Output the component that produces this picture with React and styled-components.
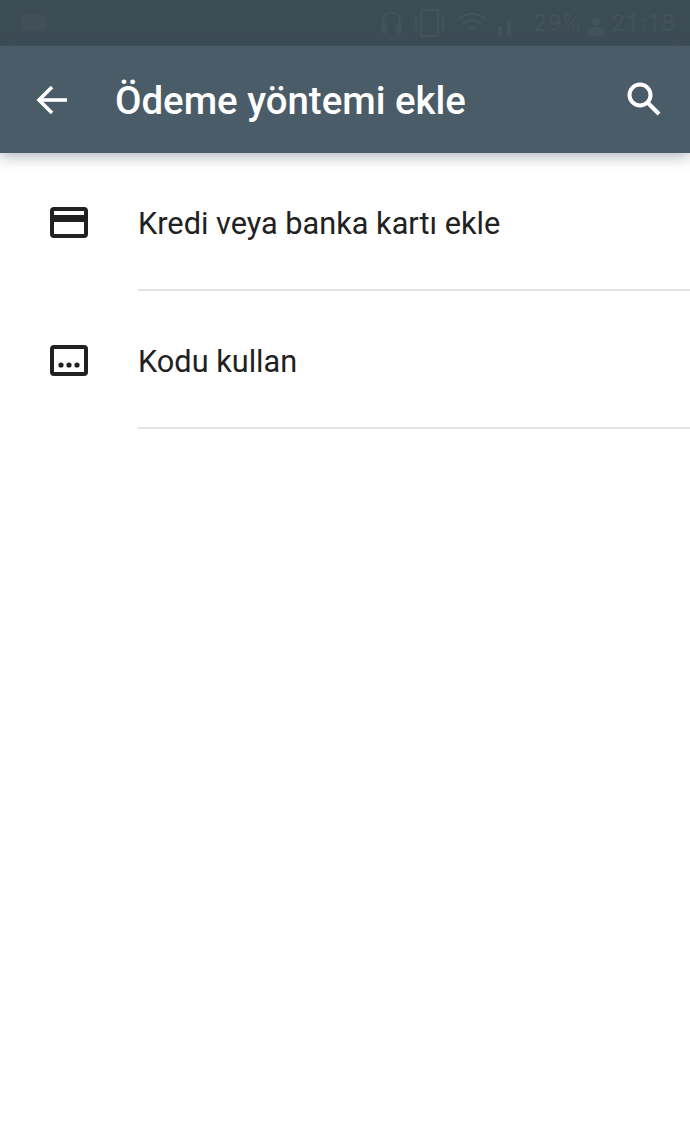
import React from 'react';
import styled, { createGlobalStyle } from 'styled-components';

const GlobalStyle = createGlobalStyle`
  html, body {
    margin: 0;
    padding: 0;
    background: #fff;
  }
`;

const Page = styled.div`
  width: 690px;
  height: 1146px;
  overflow: hidden;
  background: #fff;
  font-family: Roboto, "Liberation Sans", sans-serif;
`;

const StatusBar = styled.div`
  height: 46px;
  box-sizing: border-box;
  background: #3c4c55;
  color: #43535c;
  display: flex;
  align-items: center;
  justify-content: space-between;
  padding: 0 14px 0 20px;
`;

const StatusGroup = styled.div`
  display: flex;
  align-items: center;
  gap: 7px;
`;

const StatusIcons = styled.div`
  display: flex;
  align-items: center;
  gap: 10px;
  margin-right: 14px;
`;

const FaintIcon = styled.div`
  display: flex;
  color: #404f58;
`;

const StatusText = styled.span`
  font-size: 24px;
  line-height: 46px;
  letter-spacing: 1px;
`;

const AppBar = styled.header`
  height: 107px;
  background: #4a5c67;
  display: flex;
  align-items: center;
  padding: 0 20px 0 26px;
  box-shadow: 0 3px 14px rgba(70, 85, 100, 0.45);
  position: relative;
`;

const BarButton = styled.div`
  width: 52px;
  height: 52px;
  display: flex;
  align-items: center;
  justify-content: center;
  flex: none;
`;

const Title = styled.h1`
  margin: 2px 0 0 37px;
  flex: 1;
  color: #fff;
  font-size: 38.4px;
  font-weight: 500;
  line-height: 52px;
`;

const List = styled.div`
  display: flex;
  flex-direction: column;
`;

const Row = styled.div`
  height: 138px;
  display: flex;
  box-sizing: border-box;
`;

const IconCell = styled.div`
  width: 138px;
  flex: none;
  padding: 54px 0 0 50px;
  box-sizing: border-box;
`;

const RowBody = styled.div`
  flex: 1;
  border-bottom: 2px solid #e2e2e2;
  color: #212121;
  font-size: 30.7px;
  line-height: 40px;
  padding-top: 51px;
  box-sizing: border-box;
`;

const BackIcon = () => (
  <svg width="34" height="34" viewBox="0 0 34 34" fill="none" stroke="#fff" strokeWidth="3.6">
    <path d="M32 17H4" />
    <path d="M17 4 4 17 17 30" />
  </svg>
);

const SearchIcon = () => (
  <svg width="36" height="36" viewBox="0 0 36 36" fill="none" stroke="#fff" strokeWidth="4" style={{ marginTop: -2 }}>
    <circle cx="14" cy="14" r="10.5" />
    <path d="M21.5 21.5 33 33" />
  </svg>
);

const CardIcon = () => (
  <svg width="38" height="31" viewBox="0 0 38 31" style={{ display: 'block' }}>
    <path
      fill="#212121"
      d="M4 0h30a4 4 0 0 1 4 4v23a4 4 0 0 1-4 4H4a4 4 0 0 1-4-4V4a4 4 0 0 1 4-4Zm0 4v4h30V4H4Zm0 11v12h30V15H4Z"
      fillRule="evenodd"
    />
  </svg>
);

const CodeIcon = () => (
  <svg width="38" height="31" viewBox="0 0 38 31" style={{ display: 'block' }}>
    <path
      fill="#212121"
      d="M4 0h30a4 4 0 0 1 4 4v23a4 4 0 0 1-4 4H4a4 4 0 0 1-4-4V4a4 4 0 0 1 4-4Zm0 4v23h30V4H4Z"
      fillRule="evenodd"
    />
    <circle cx="11" cy="20" r="2.6" fill="#212121" />
    <circle cx="19" cy="20" r="2.6" fill="#212121" />
    <circle cx="27" cy="20" r="2.6" fill="#212121" />
  </svg>
);

const AndroidGlyph = () => (
  <svg width="28" height="20" viewBox="0 0 28 20" fill="currentColor">
    <path d="M3 2h22a2 2 0 0 1 2 2v12a2 2 0 0 1-2 2H3a2 2 0 0 1-2-2V4a2 2 0 0 1 2-2Z" />
  </svg>
);

const HeadsetGlyph = () => (
  <svg width="22" height="26" viewBox="0 0 22 26" fill="none" stroke="currentColor" strokeWidth="2.5">
    <path d="M2 22V11a8.500 8.500 0 0 1 17 0v11" />
    <path d="M2 16h3v6H2ZM16 16h3v6h-3Z" />
  </svg>
);

const VibrateGlyph = () => (
  <svg width="34" height="30" viewBox="0 0 34 30" fill="none" stroke="currentColor" strokeWidth="2.5">
    <rect x="8" y="2" width="17" height="26" rx="2" />
    <path d="M3 8v14M30 8v14" />
  </svg>
);

const WifiGlyph = () => (
  <svg width="30" height="26" viewBox="0 0 32 26" fill="none" stroke="currentColor" strokeWidth="2.5">
    <path d="M2 9a20 20 0 0 1 28 0M7 14a13 13 0 0 1 18 0M12 19a6 6 0 0 1 8 0" />
  </svg>
);

const SignalGlyph = () => (
  <svg width="16" height="30" viewBox="0 0 16 30" fill="currentColor">
    <path d="M1 18h4v10H1ZM10 12h4v16h-4Z" />
  </svg>
);

const PersonGlyph = () => (
  <svg width="16" height="20" viewBox="0 0 18 22" fill="currentColor" style={{ marginTop: 6 }}>
    <circle cx="9" cy="6" r="5" />
    <path d="M0 22v-5c0-3 4-5 9-5s9 2 9 5v5Z" />
  </svg>
);

export default function App() {
  return (
    <Page>
      <GlobalStyle />
      <StatusBar>
        <FaintIcon>
          <AndroidGlyph />
        </FaintIcon>
        <StatusGroup>
          <StatusIcons>
            <HeadsetGlyph />
            <VibrateGlyph />
            <WifiGlyph />
            <SignalGlyph />
          </StatusIcons>
          <StatusText>29%</StatusText>
          <PersonGlyph />
          <StatusText>21:18</StatusText>
        </StatusGroup>
      </StatusBar>
      <AppBar>
        <BarButton><BackIcon /></BarButton>
        <Title>Ödeme yöntemi ekle</Title>
        <BarButton><SearchIcon /></BarButton>
      </AppBar>
      <List>
        <Row>
          <IconCell><CardIcon /></IconCell>
          <RowBody>Kredi veya banka kartı ekle</RowBody>
        </Row>
        <Row>
          <IconCell><CodeIcon /></IconCell>
          <RowBody>Kodu kullan</RowBody>
        </Row>
      </List>
    </Page>
  );
}
